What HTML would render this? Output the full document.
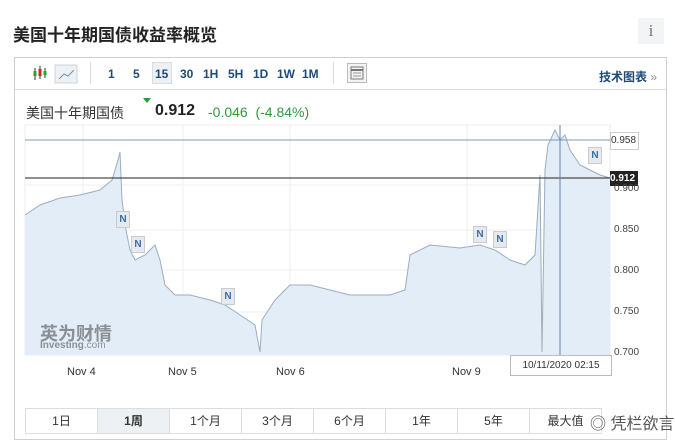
<!DOCTYPE html><html><head><meta charset="utf-8"><style>
body{margin:0;width:675px;height:446px;background:#fff;font-family:"Liberation Sans","Noto Sans CJK SC",sans-serif;position:relative;overflow:hidden}
.a{position:absolute}
.t{font-size:17px;font-weight:bold;color:#222;left:13px;top:21px}
.info{left:638px;top:18px;width:26px;height:26px;background:#f3f4f6;color:#777;font-family:"Liberation Serif",serif;font-size:17px;text-align:center;line-height:26px}
.panel{left:14px;top:57px;width:653px;height:383px;border:1px solid #d0d0d0;box-sizing:border-box}
.tb{left:15px;top:58px;width:651px;height:31px;border-bottom:1px solid #ddd}
.tf{font-size:12px;font-weight:bold;color:#1e4a7a;top:67px}
.btns{left:25px;top:408px;display:flex;border:1px solid #ddd}
.btns div{width:71px;height:24px;border-right:1px solid #ddd;font-size:12px;color:#333;text-align:center;line-height:24px}
.ax{font-size:10px;color:#444;left:614px}
.xl{font-size:11px;color:#333;top:366px}
.n{width:12px;height:15px;background:#e6eaee;border:1px solid #c8ccd0;font-size:10px;font-weight:bold;color:#3b6ea5;text-align:center;line-height:15px}
</style></head><body>
<div class="a t">美国十年期国债收益率概览</div>
<div class="a info">i</div>
<div class="a panel"></div>
<div class="a tb"></div>
<svg class="a" style="left:32px;top:64px" width="50" height="20"><g stroke="#333" stroke-width="1"><line x1="3" y1="4" x2="3" y2="16"/><line x1="8" y1="2" x2="8" y2="15"/><line x1="13" y1="4" x2="13" y2="14"/></g><rect x="1.5" y="7" width="3" height="5" fill="#2a2"/><rect x="6.5" y="5" width="3" height="7" fill="#d22"/><rect x="11.5" y="7" width="3" height="4" fill="#2a2"/><rect x="23" y="1" width="22" height="18" fill="#eef1f4" stroke="#cfd4d9"/><polyline points="27,15 32,10 36,12 42,6" fill="none" stroke="#7a8ea3"/></svg>
<div class="a" style="left:90px;top:62px;width:1px;height:22px;background:#ddd"></div>
<div class="a" style="left:152px;top:62px;width:20px;height:22px;background:#eef1f4;border:1px solid #d8dde2;box-sizing:border-box"></div>
<div class="a tf" style="left:108px">1</div><div class="a tf" style="left:133px">5</div><div class="a tf" style="left:155px">15</div><div class="a tf" style="left:180px">30</div><div class="a tf" style="left:203px">1H</div><div class="a tf" style="left:228px">5H</div><div class="a tf" style="left:253px">1D</div><div class="a tf" style="left:277px">1W</div><div class="a tf" style="left:302px">1M</div>
<div class="a" style="left:333px;top:62px;width:1px;height:22px;background:#ddd"></div>
<svg class="a" style="left:347px;top:63px" width="20" height="20"><rect x="0.5" y="0.5" width="19" height="19" fill="#f4f4f4" stroke="#bbb"/><rect x="4" y="4" width="12" height="12" fill="none" stroke="#777"/><line x1="4" y1="7" x2="16" y2="7" stroke="#777" stroke-width="2"/><line x1="6" y1="10" x2="14" y2="10" stroke="#999"/><line x1="6" y1="13" x2="14" y2="13" stroke="#999"/></svg>
<div class="a tf" style="left:599px;top:68px">技术图表 <span style="color:#888;font-weight:normal">»</span></div>
<div class="a" style="left:26px;top:103px;font-size:14px;color:#333">美国十年期国债</div>
<div class="a" style="left:143px;top:98px;width:0;height:0;border-left:4px solid transparent;border-right:4px solid transparent;border-top:5px solid #2a9a3a"></div>
<div class="a" style="left:155px;top:102px;font-size:16px;font-weight:bold;color:#222">0.912</div>
<div class="a" style="left:208px;top:104px;font-size:14px;color:#2f9a3a">-0.046 &nbsp;(-4.84%)</div>
<svg class="a" style="left:0;top:0" width="675" height="446">
<rect x="25" y="125" width="585" height="230" fill="#fff" stroke="#eee"/>
<g stroke="#eef0f2"><line x1="25" y1="185" x2="610" y2="185"/><line x1="25" y1="230" x2="610" y2="230"/><line x1="25" y1="270" x2="610" y2="270"/><line x1="25" y1="312" x2="610" y2="312"/><line x1="83" y1="125" x2="83" y2="355"/><line x1="183" y1="125" x2="183" y2="355"/><line x1="290" y1="125" x2="290" y2="355"/><line x1="467" y1="125" x2="467" y2="355"/></g>
<polygon fill="#e3edf7" points="25,355 25,215 40,205 60,198 80,195 100,190 112,180 118,160 120,152 122,200 126,230 130,250 135,260 145,255 155,245 160,260 165,285 175,295 190,295 210,300 225,305 240,315 255,325 260,352 262,320 275,300 290,285 310,285 330,290 350,295 370,295 390,295 405,290 410,255 430,245 460,248 480,245 495,250 510,260 525,265 535,255 540,175 542,352 545,170 548,145 555,130 560,140 565,135 570,150 580,165 590,170 600,175 610,178 610,355"/>
<polyline fill="none" stroke="#9badbe" stroke-width="1" points="25,215 40,205 60,198 80,195 100,190 112,180 118,160 120,152 122,200 126,230 130,250 135,260 145,255 155,245 160,260 165,285 175,295 190,295 210,300 225,305 240,315 255,325 260,352 262,320 275,300 290,285 310,285 330,290 350,295 370,295 390,295 405,290 410,255 430,245 460,248 480,245 495,250 510,260 525,265 535,255 540,175 542,352 545,170 548,145 555,130 560,140 565,135 570,150 580,165 590,170 600,175 610,178"/>
<line x1="25" y1="140" x2="610" y2="140" stroke="#7e9bb5"/>
<line x1="25" y1="178" x2="610" y2="178" stroke="#222"/>
<line x1="560" y1="125" x2="560" y2="372" stroke="#5f86ad"/>
</svg>
<div class="a" style="left:610px;top:132px;width:27px;height:16px;border:1px solid #ccc;background:#fff;font-size:10px;line-height:16px;color:#333">0.958</div>
<div class="a" style="left:610px;top:171px;width:28px;height:15px;background:#222;color:#fff;font-size:10px;line-height:15px;font-weight:bold">0.912</div>
<div class="a ax" style="top:183px">0.900</div><div class="a ax" style="top:224px">0.850</div><div class="a ax" style="top:265px">0.800</div><div class="a ax" style="top:306px">0.750</div><div class="a ax" style="top:347px">0.700</div>
<div class="a n" style="left:116px;top:211px">N</div><div class="a n" style="left:131px;top:236px">N</div><div class="a n" style="left:221px;top:288px">N</div><div class="a n" style="left:473px;top:226px">N</div><div class="a n" style="left:493px;top:231px">N</div><div class="a n" style="left:588px;top:147px">N</div>
<div class="a" style="left:40px;top:320px;font-size:18px;font-weight:bold;color:#8a8f95">英为财情</div>
<div class="a" style="left:40px;top:340px;font-size:10px;font-weight:bold;color:#8a8f95">Investing<span style="font-weight:normal">.com</span></div>
<div class="a xl" style="left:67px">Nov 4</div><div class="a xl" style="left:168px">Nov 5</div><div class="a xl" style="left:276px">Nov 6</div><div class="a xl" style="left:452px">Nov 9</div>
<div class="a" style="left:510px;top:355px;width:100px;height:19px;border:1px solid #bbb;background:#fff;font-size:10px;line-height:19px;text-align:center;color:#333">10/11/2020 02:15</div>
<div class="a btns"><div>1日</div><div style="background:#eef1f4;font-weight:bold">1周</div><div>1个月</div><div>3个月</div><div>6个月</div><div>1年</div><div>5年</div><div style="border-right:none">最大值</div></div>
<div class="a" style="left:590px;top:410px;font-size:16px;color:#555">◎ 凭栏欲言</div>
</body></html>
